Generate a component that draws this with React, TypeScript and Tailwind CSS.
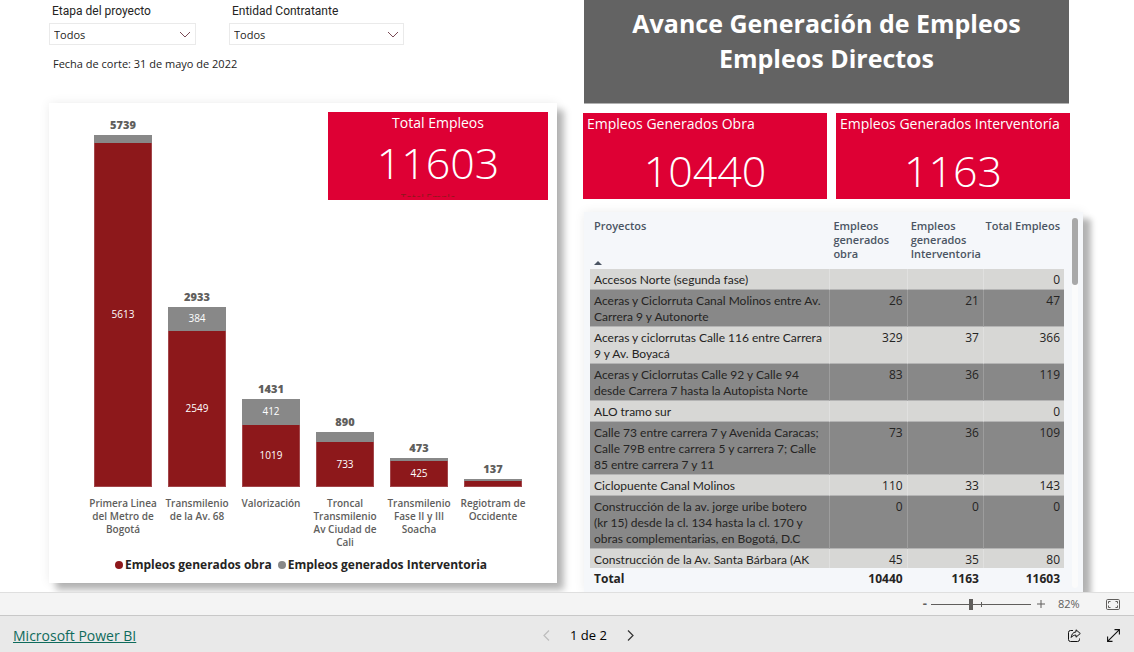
import React from "react";

type Bar = { name: string; obra: number; inter: number; total: number; showInter?: boolean; showObra?: boolean };

const bars: Bar[] = [
  { name: "Primera Linea del Metro de Bogotá", obra: 5613, inter: 126, total: 5739, showObra: true },
  { name: "Transmilenio de la Av. 68", obra: 2549, inter: 384, total: 2933, showObra: true, showInter: true },
  { name: "Valorización", obra: 1019, inter: 412, total: 1431, showObra: true, showInter: true },
  { name: "Troncal Transmilenio Av Ciudad de Cali", obra: 733, inter: 157, total: 890, showObra: true },
  { name: "Transmilenio Fase II y III Soacha", obra: 425, inter: 48, total: 473, showObra: true },
  { name: "Regiotram de Occidente", obra: 95, inter: 42, total: 137 },
];
const maxTotal = 5739;

const rows: [string, string, string, string][] = [
  ["Accesos Norte (segunda fase)", "", "", "0"],
  ["Aceras y Ciclorruta Canal Molinos entre Av.\nCarrera 9 y Autonorte", "26", "21", "47"],
  ["Aceras y ciclorrutas Calle 116 entre Carrera\n9 y Av. Boyacá", "329", "37", "366"],
  ["Aceras y Ciclorrutas Calle 92 y Calle 94\ndesde Carrera 7 hasta la Autopista Norte", "83", "36", "119"],
  ["ALO tramo sur", "", "", "0"],
  ["Calle 73 entre carrera 7 y Avenida Caracas;\nCalle 79B entre carrera 5 y carrera 7; Calle\n85 entre carrera 7 y 11", "73", "36", "109"],
  ["Ciclopuente Canal Molinos", "110", "33", "143"],
  ["Construcción de la av. jorge uribe botero\n(kr 15) desde la cl. 134 hasta la cl. 170 y\nobras complementarias, en Bogotá, D.C", "0", "0", "0"],
  ["Construcción de la Av. Santa Bárbara (AK", "45", "35", "80"],
];

function Filter({ id, label, className }: { id: string; label: string; className: string }) {
  return (
    <div className={className}>
      <label htmlFor={id} className="block pl-[3px] font-['Roboto',sans-serif] text-[12px] leading-4 text-[#252423]">
        {label}
      </label>
      <div className="relative mt-1">
        <select
          id={id}
          className="block h-[22px] w-full appearance-none border border-[#eaeaea] bg-white pt-0.5 pl-1 text-[11px] text-[#252423]"
        >
          <option>Todos</option>
        </select>
        <svg viewBox="0 0 12 7" className="pointer-events-none absolute top-2 right-[5px] h-[7px] w-3" fill="none" stroke="#7a4a55">
          <path d="M1 1l5 5 5-5" />
        </svg>
      </div>
    </div>
  );
}

function Kpi({ label, value }: { label: string; value: string }) {
  return (
    <div className="h-[86px] bg-[#de0034] text-white">
      <div className="px-1 pt-px text-[14px] leading-5 whitespace-nowrap">{label}</div>
      <div className="pt-2 text-center text-[43px] leading-[58px] font-light">{value}</div>
    </div>
  );
}

function Chart() {
  return (
    <section className="relative mt-[31px] bg-white pt-8 pr-[27px] pb-2 pl-[37px] shadow-[7px_7px_7px_rgba(0,0,0,0.28),0_0_10px_rgba(0,0,0,0.08)]">
      <div className="grid h-[352px] grid-cols-6">
        {bars.map((b) => (
          <div key={b.name} className="flex h-full flex-col justify-end px-2">
            <div className="shrink-0 pb-1 text-center text-[11px] leading-3 font-extrabold text-[#605e5c]">{b.total}</div>
            <div
              className="flex shrink-0 items-center justify-center bg-[#888888] text-[10px] text-white"
              style={{ height: `${(b.inter / maxTotal) * 100}%` }}
            >
              {b.showInter && b.inter}
            </div>
            <div
              className="flex shrink-0 items-center justify-center border border-t-0 border-[#a2464a] bg-[#8d181b] text-[10px] text-white"
              style={{ height: `${(b.obra / maxTotal) * 100}%` }}
            >
              {b.showObra && b.obra}
            </div>
          </div>
        ))}
      </div>
      <div className="mt-[10px] grid grid-cols-6">
        {bars.map((b) => (
          <div key={b.name} className="px-0.5 text-center text-[10px] leading-[13px] font-semibold text-[#605e5c]">
            {b.name}
          </div>
        ))}
      </div>
      <div className="mt-[7px] mb-px flex justify-center gap-1.5 pr-3.5 text-[12px] leading-[18px] font-bold text-[#252423]">
        <span className="flex items-center gap-0.5">
          <i className="size-2 rounded-full bg-[#8d181b]" />
          Empleos generados obra
        </span>
        <span className="flex items-center gap-0.5">
          <i className="size-2 rounded-full bg-[#888888]" />
          Empleos generados Interventoria
        </span>
      </div>
      <div className="absolute top-[9px] right-[9px] flex h-22 w-[220px] flex-col items-center bg-[#de0034] text-white">
        <div className="pt-px text-[14px] leading-5">Total Empleos</div>
        <div className="text-[43px] leading-[60px] font-light">11603</div>
        <div className="h-1 overflow-hidden pr-5 text-[10px] leading-[10px] text-[#8d181b]">Total Emple</div>
      </div>
    </section>
  );
}

function ProjectTable() {
  const num = "pr-1 text-right align-top";
  return (
    <section className="mt-[13px] ml-px flex min-h-0 flex-1 gap-2 bg-[#f5f7fa] pr-[5px] pl-1.5 shadow-[8px_7px_6px_rgba(0,0,0,0.28),0_0_10px_rgba(0,0,0,0.08)]">
      <div className="min-h-0 flex-1 overflow-y-auto [scrollbar-width:none]">
        <table className="w-full table-fixed border-separate border-spacing-0 text-[12px] leading-4 text-[#252423]">
          <colgroup>
            <col className="w-[50.5%]" />
            <col className="w-[16.3%]" />
            <col className="w-[16.1%]" />
            <col className="w-[17.1%]" />
          </colgroup>
          <thead className="sticky top-0 bg-[#f5f7fa] text-[11px] leading-[14px] text-[#4b5563]">
            <tr className="h-[57px] align-top">
              <th className="pt-[7px] pl-1 text-left font-semibold">
                Proyectos
                <svg viewBox="0 0 8 4" className="mt-7 h-1 w-2" fill="#4b5563">
                  <path d="M0 4L4 0l4 4z" />
                </svg>
              </th>
              <th className="pt-[7px] pl-1 text-left font-semibold">Empleos generados obra</th>
              <th className="pt-[7px] pl-1 text-left font-semibold">Empleos generados Interventoria</th>
              <th className="pt-[7px] pr-1 text-right font-semibold whitespace-nowrap">Total Empleos</th>
            </tr>
          </thead>
          <tbody>
            {rows.map((r, i) => (
              <tr
                key={r[0]}
                className={
                  i % 2
                    ? "bg-[#888888] [&>td]:border-b [&>td]:border-[#b4b4b4] [&>td+td]:border-l [&>td+td]:border-l-[#9d9d9d]"
                    : "bg-[#d7d7d5] [&>td]:border-b [&>td]:border-[#b4b4b4] [&>td+td]:border-l [&>td+td]:border-l-[#e0e0df]"
                }
              >
                <td className="pt-[3px] pb-px pl-1 align-top font-['Lato','Open_Sans',sans-serif] whitespace-pre">{r[0]}</td>
                <td className={`pt-[3px] pb-px ${num}`}>{r[1]}</td>
                <td className={`pt-[3px] pb-px ${num}`}>{r[2]}</td>
                <td className={`pt-[3px] pb-px ${num}`}>{r[3]}</td>
              </tr>
            ))}
          </tbody>
          <tfoot className="sticky bottom-0 bg-[#f5f7fa] font-bold">
            <tr className="h-6">
              <td className="pt-[3px] pl-1 align-top">Total</td>
              <td className={`pt-[3px] ${num}`}>10440</td>
              <td className={`pt-[3px] ${num}`}>1163</td>
              <td className={`pt-[3px] ${num}`}>11603</td>
            </tr>
          </tfoot>
        </table>
      </div>
      <div className="mt-1.5 mb-1 w-1.5 rounded-full bg-[#fbfbfb]">
        <div className="h-[67px] rounded-full bg-[#a8a8a8]" />
      </div>
    </section>
  );
}

export default function App() {
  return (
    <div className="flex h-screen flex-col bg-white font-['Open_Sans','Noto_Sans',sans-serif]">
      <main className="grid min-h-0 flex-1 grid-cols-[508fr_500fr] gap-[26px] overflow-hidden pr-[51px] pl-[49px]">
        <div className="pt-[3px]">
          <div className="flex gap-[33px]">
            <Filter id="etapa" label="Etapa del proyecto" className="w-[147px]" />
            <Filter id="entidad" label="Entidad Contratante" className="w-[175px]" />
          </div>
          <p className="mt-[11px] pl-1 text-[11px] leading-4 text-[#252423]">Fecha de corte: 31 de mayo de 2022</p>
          <Chart />
        </div>
        <div className="flex min-h-0 flex-col">
          <h1 className="mr-3.5 ml-px h-[104px] border-b border-[#b0b0b0] bg-[#636363] pt-1.5 text-center text-[25px] leading-[35px] font-bold text-white">
            Avance Generación de Empleos
            <br />
            Empleos Directos
          </h1>
          <div className="mt-[9px] mr-[13px] grid grid-cols-[244fr_234fr] gap-[9px]">
            <Kpi label="Empleos Generados Obra" value="10440" />
            <Kpi label="Empleos Generados Interventoría" value="1163" />
          </div>
          <ProjectTable />
        </div>
      </main>
      <div className="z-10 flex h-[23px] shrink-0 items-center justify-end border-t border-[#dfdfdf] bg-[#f4f4f4] pr-3.5 text-[#605e5c]">
        <button aria-label="Alejar" className="mr-1 text-[13px] font-bold">-</button>
        <div className="relative flex w-[100px] items-center">
          <span className="absolute left-[50px] h-[5px] w-px bg-[#605e5c]" />
          <input
            type="range"
            aria-label="Zoom"
            defaultValue={40}
            className="h-3 w-full appearance-none bg-transparent [&::-webkit-slider-runnable-track]:h-px [&::-webkit-slider-runnable-track]:bg-[#605e5c] [&::-webkit-slider-thumb]:-mt-[5px] [&::-webkit-slider-thumb]:h-[11px] [&::-webkit-slider-thumb]:w-1 [&::-webkit-slider-thumb]:appearance-none [&::-webkit-slider-thumb]:bg-[#605e5c]"
          />
        </div>
        <button aria-label="Acercar" className="ml-1.5">
          <svg viewBox="0 0 8 8" className="size-2" stroke="#605e5c">
            <path d="M4 0v8M0 4h8" />
          </svg>
        </button>
        <span className="ml-[13px] w-[26px] text-[11px]">82%</span>
        <button aria-label="Ajustar a la página" className="ml-[22px]">
          <svg viewBox="0 0 14 11" className="h-[11px] w-3.5" fill="none" stroke="#605e5c">
            <rect x=".5" y=".5" width="13" height="10" rx="1.2" />
            <path d="M2.5 4.5v-2h2M9.5 2.5h2v2M11.500 6.500v2h-2M4.500 8.500h-2v-2" />
          </svg>
        </button>
      </div>
      <footer className="z-10 grid h-[37px] shrink-0 grid-cols-3 items-center border-t border-[#c8c8c8] bg-[#e9e9e9] pt-0.5 pr-3.5 pl-[13px]">
        <a href="#" className="text-[14px] text-[#0f6b5c] underline">Microsoft Power BI</a>
        <nav className="flex items-center justify-center gap-5 pl-11">
          <button aria-label="Página anterior">
            <svg viewBox="0 0 7 11" className="h-[11px] w-[7px]" fill="none" stroke="#bdbdbd" strokeWidth="1.2">
              <path d="M6 .5l-5 5 5 5" />
            </svg>
          </button>
          <span className="text-[13px] leading-4 font-medium text-black">1 de 2</span>
          <button aria-label="Página siguiente">
            <svg viewBox="0 0 7 11" className="h-[11px] w-[7px]" fill="none" stroke="#333" strokeWidth="1.2">
              <path d="M1 .5l5 5-5 5" />
            </svg>
          </button>
        </nav>
        <div className="flex items-center justify-end gap-[26px]">
          <button aria-label="Compartir">
            <svg viewBox="0 0 13 13" className="size-[13px]" fill="none" stroke="#111" strokeLinejoin="round">
              <path d="M5 1.500H2.500a2 2 0 0 0-2 2v7a2 2 0 0 0 2 2h7a2 2 0 0 0 2-2V9.500" />
              <path d="M8 .8l4.300 3.700L8 8.200V6.100C5.800 6.100 4.300 6.900 3.200 8.500 3.400 5.500 5 3.200 8 2.900z" />
            </svg>
          </button>
          <button aria-label="Pantalla completa">
            <svg viewBox="0 0 13 13" className="size-[13px]" fill="none" stroke="#111" strokeWidth="1.100">
              <path d="M.8 12.200L12.200.8M7.500.6h4.900v4.900M.6 7.500v4.900h4.900" />
            </svg>
          </button>
        </div>
      </footer>
    </div>
  );
}
